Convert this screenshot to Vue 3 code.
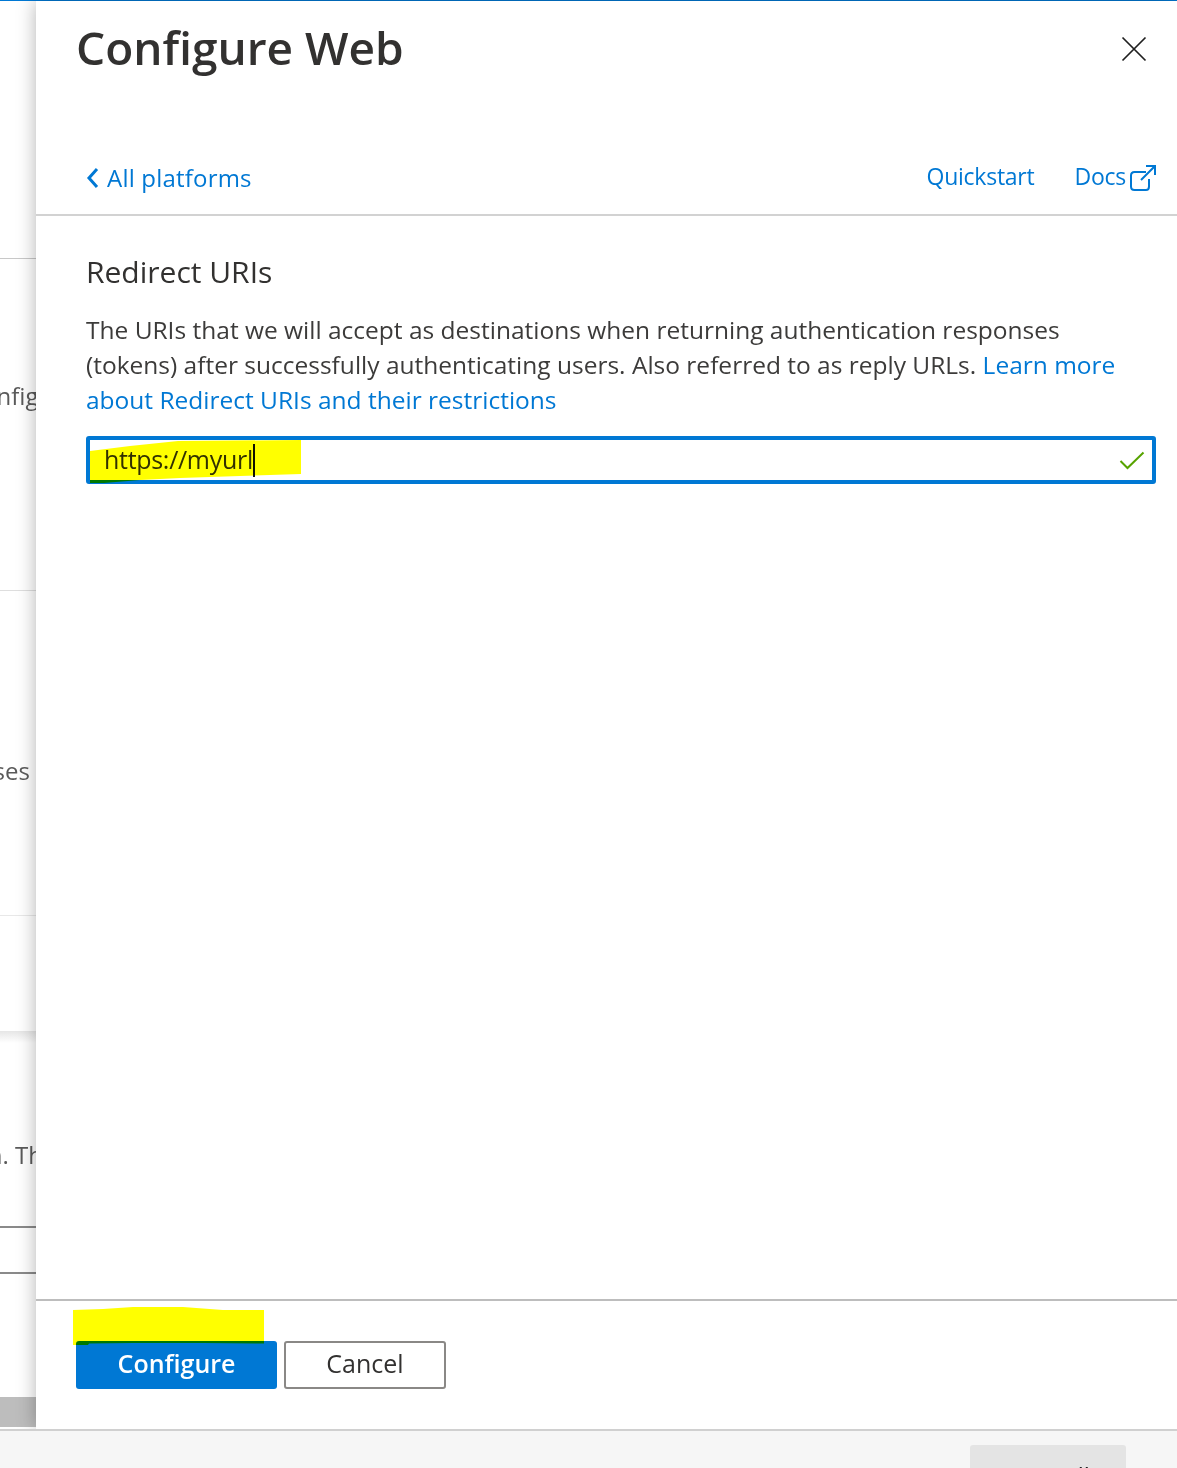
<script setup>
const paragraph = 'The URIs that we will accept as destinations when returning authentication responses (tokens) after successfully authenticating users. Also referred to as reply URLs.'
</script>

<template>
  <div class="page">
    <div class="stage">
      <aside class="behind">
        <div class="sec s1"></div>
        <div class="sec s2"><span class="clip c1">Configure</span></div>
        <div class="sec s3"><span class="clip c2">responses</span></div>
        <div class="sec s4"></div>
        <div class="sec s5"><span class="clip c3">application. The</span></div>
        <div class="sec s6"></div>
        <div class="sec s7"></div>
        <div class="sec s8"></div>
      </aside>

      <main class="panel">
        <header class="head">
          <h1>Configure Web</h1>
          <svg class="close" width="26" height="26" viewBox="0 0 26 26" aria-label="Close">
            <path d="M1.5 1.5 24.5 24.5M24.5 1.5 1.5 24.5" fill="none" stroke="#1f1f1f" stroke-width="1.7" />
          </svg>
        </header>

        <nav class="links">
          <a class="back">
            <svg width="13" height="22" viewBox="0 0 13 22">
              <path d="M11 2 3 11l8 9" fill="none" stroke="#0078d4" stroke-width="3" />
            </svg>
            <span>All platforms</span>
          </a>
          <div class="right">
            <a>Quickstart</a>
            <a class="docs">
              <span>Docs</span>
              <svg width="28" height="28" viewBox="0 0 28 28">
                <path d="M17 8H5.5Q2 8 2 11.5V22.500Q2 26 5.500 26H17Q20 26 20 22.500V15M12 16 26 2M17 2H26V11" fill="none" stroke="#0078d4" stroke-width="2" />
              </svg>
            </a>
          </div>
        </nav>

        <section class="body">
          <h2>Redirect URIs</h2>
          <p>{{ paragraph }} <a>Learn more about Redirect URIs and their restrictions</a></p>
          <div class="field">
            <span class="value">https://myurl</span><i class="caret"></i>
            <svg class="ok" width="26" height="20" viewBox="0 0 26 20">
              <path d="M1.500 10 8.500 17 24.500 1.500" fill="none" stroke="#57a300" stroke-width="2" />
            </svg>
          </div>
        </section>

        <footer class="actions">
          <button class="primary"><span>Configure</span></button>
          <button class="secondary"><span>Cancel</span></button>
        </footer>
      </main>
    </div>

    <div class="bottom">
      <div class="ghost"><span>Save all</span></div>
      <span class="feedback">Got feedback?</span>
    </div>

    <svg class="marker m1" width="220" height="50" viewBox="0 0 220 50">
      <path d="M0 11 40 6 88 1 211 0V34L150 36 90 38 50 40 14 43 0 43Z" fill="#ffff00" />
    </svg>
    <svg class="marker m2" width="195" height="42" viewBox="0 0 195 42">
      <path d="M0 3 30 2 60 0 110 0 150 3H191V36.500L130 36 60 36 16 36.500 15 38H0Z" fill="#ffff00" />
    </svg>
  </div>
</template>

<style>
html, body { margin: 0; background: #fff; }
</style>

<style scoped>
.page {
  position: relative;
  width: 1177px;
  height: 1468px;
  overflow: hidden;
  display: flex;
  flex-direction: column;
  font-family: "Open Sans", "Noto Sans", sans-serif;
  color: #323130;
  background: #fff;
}
.stage { flex: 0 0 1429px; height: 1429px; display: flex; border-top: 1px solid #0078d4; box-sizing: border-box; }
.behind { width: 36px; flex: none; display: flex; flex-direction: column; overflow: hidden; background: #fff; }
.sec { position: relative; box-sizing: border-box; overflow: hidden; flex: none; white-space: nowrap; font-size: 24px; color: #5a5a5a; }
.s1 { height: 258px; border-bottom: 1px solid #c8c8c8; }
.s2 { height: 332px; border-bottom: 1px solid #dedede; }
.s3 { height: 325px; border-bottom: 1px solid #e8e8e8; }
.s4 { height: 115px; }
.s5 { height: 197px; border-bottom: 2px solid #8a8a8a; background: linear-gradient(#e6e6e6, #fff 12px); }
.s6 { height: 46px; border-bottom: 2px solid #8a8a8a; }
.s7 { height: 123px; }
.s8 { height: 30px; background: #bdbdbd; }
.clip { display: block; line-height: 32px; }
.c1 { margin: 121px 0 0 -33px; }
.c2 { margin: 164px 0 0 -85px; }
.c3 { margin: 108px 0 0 -121px; }

.panel {
  flex: 1;
  min-width: 0;
  display: flex;
  flex-direction: column;
  background: #fff;
  box-shadow: 0 0 18px rgba(0, 0, 0, .3);
  position: relative;
  z-index: 1;
}
.head { height: 107px; flex: none; display: flex; justify-content: space-between; align-items: flex-start; padding: 0 30px 0 40px; }
h1 { margin: 12px 0 0; font-size: 46px; line-height: 68px; font-weight: 600; color: #323130; }
.close { margin-top: 35px; }
.links {
  height: 108px;
  flex: none;
  box-sizing: border-box;
  display: flex;
  justify-content: space-between;
  padding: 53px 20px 0 50px;
  border-bottom: 2px solid #d2d2d2;
  color: #0078d4;
  font-size: 24px;
}
.links a { color: #0078d4; }
.back { display: flex; align-items: flex-start; gap: 8px; line-height: 34px; letter-spacing: .2px; }
.back svg { margin-top: 6px; }
.right { display: flex; gap: 40px; line-height: 32px; margin-top: -1px; font-size: 23px; letter-spacing: -.25px; }
.docs { display: flex; gap: 3px; }
.docs svg { margin-top: 4px; }
.body { flex: 1; padding: 0 21px 0 50px; }
h2 { margin: 35px 0 0; font-size: 30px; line-height: 42px; font-weight: 400; color: #323130; }
p { margin: 19px 0 0; max-width: 1040px; font-size: 24.5px; line-height: 35px; color: #3c3b3a; }
p a { color: #0078d4; }
.field {
  margin-top: 19px;
  height: 48px;
  box-sizing: border-box;
  border: 4px solid #0078d4;
  border-radius: 3px;
  padding: 0 14px;
  display: flex;
  align-items: center;
  font-size: 25px;
  letter-spacing: -.3px;
  position: relative;
}
.value { color: #323130; margin-bottom: 2px; }
.caret { width: 2px; height: 33px; background: #111; }
.ok { margin-left: auto; margin-right: -7px; margin-top: 2px; }
.actions {
  height: 130px;
  flex: none;
  box-sizing: border-box;
  border-top: 2px solid #bdbdbd;
  padding: 40px 0 0 40px;
  display: flex;
  align-items: flex-start;
  gap: 7px;
}
button { font-family: inherit; font-size: 25px; height: 48px; box-sizing: border-box; border-radius: 3px; padding: 0 0 4px; }
.primary { width: 201px; background: #0078d4; color: #fff; border: 0; font-weight: 600; }
.secondary { width: 162px; background: #fff; color: #323130; border: 2px solid #8a8886; }

.bottom { flex: 1; position: relative; z-index: 2; display: flex; align-items: flex-start; background: #f6f6f6; border-top: 2px solid #d0d0d0; padding: 14px 0 0 970px; white-space: nowrap; }
.ghost { flex: none; width: 156px; height: 40px; background: #e4e4e4; border-radius: 3px 3px 0 0; text-align: center; font-size: 24px; line-height: 40px; padding-top: 11px; box-sizing: border-box; color: #222; }
.feedback { flex: none; margin-left: 27px; font-size: 24px; line-height: 40px; padding-top: 11px; color: #222; }

.marker { position: absolute; z-index: 5; mix-blend-mode: multiply; }
.m1 { left: 90px; top: 440px; }
.m2 { left: 73px; top: 1307px; }
</style>
